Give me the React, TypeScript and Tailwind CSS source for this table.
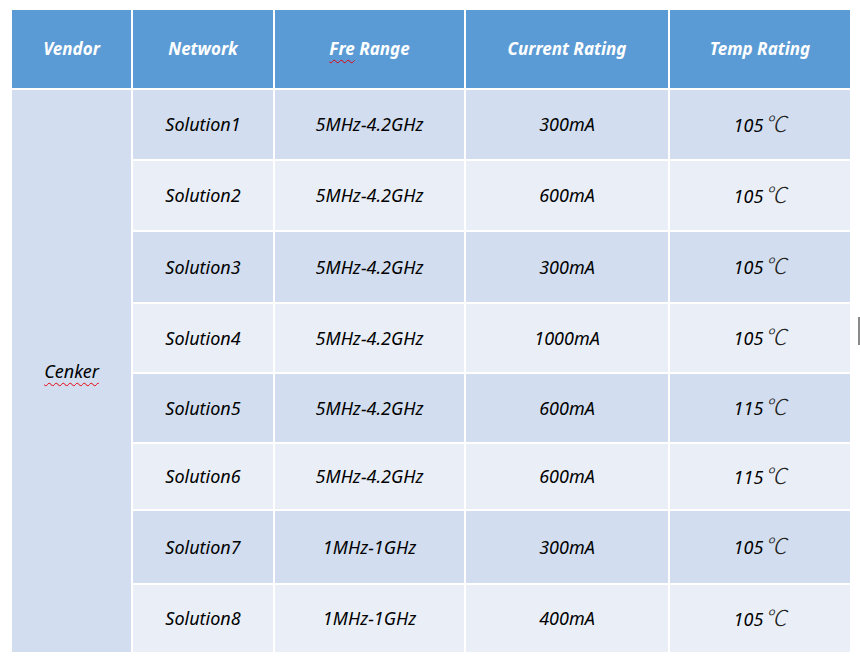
const rows = [
  { network: "Solution1", range: "5MHz-4.2GHz", current: "300mA", temp: "105", h: "h-[69px]" },
  { network: "Solution2", range: "5MHz-4.2GHz", current: "600mA", temp: "105", h: "h-[69px]" },
  { network: "Solution3", range: "5MHz-4.2GHz", current: "300mA", temp: "105", h: "h-[70px]" },
  { network: "Solution4", range: "5MHz-4.2GHz", current: "1000mA", temp: "105", h: "h-[68px]" },
  { network: "Solution5", range: "5MHz-4.2GHz", current: "600mA", temp: "115", h: "h-[68px]" },
  { network: "Solution6", range: "5MHz-4.2GHz", current: "600mA", temp: "115", h: "h-[65px]" },
  { network: "Solution7", range: "1MHz-1GHz", current: "300mA", temp: "105", h: "h-[72px]" },
  { network: "Solution8", range: "1MHz-1GHz", current: "400mA", temp: "105", h: "h-[67px]" },
];

function Cell({ children, shade, h }: { children: React.ReactNode; shade: boolean; h: string }) {
  return (
    <div className={`flex items-center justify-center ${h} ${shade ? "bg-[#d2deef]" : "bg-[#eaeff7]"}`}>
      {children}
    </div>
  );
}

function Temp({ value }: { value: string }) {
  return (
    <span className="flex items-baseline">
      {value}
      <span className="ml-[1px] font-['Noto_Sans_CJK_SC',sans-serif] text-[22px] leading-none font-extralight text-[#222]">℃</span>
    </span>
  );
}

export default function App() {
  return (
    <div className="relative h-[661px] w-[860px] bg-white pl-[12px] pt-[10px] font-['Noto_Sans',sans-serif] text-[18px] italic text-black">
      <div className="grid w-[838px] grid-cols-[119px_140px_189px_202px_180px] gap-[2px] bg-white">
        {["Vendor", "Network", "Fre Range", "Current Rating", "Temp Rating"].map((t) => (
          <div key={t} className="flex h-[78px] items-center justify-center bg-[#5b9bd5] text-[17px] font-bold text-white">
            {t === "Fre Range" ? (
              <span>
                <span className="underline decoration-red-600 decoration-wavy decoration-1 underline-offset-4">Fre</span> Range
              </span>
            ) : (
              t
            )}
          </div>
        ))}
        <div className="row-span-8 flex items-center justify-center bg-[#d2deef]">
          <span className="underline decoration-red-600 decoration-wavy decoration-1 underline-offset-4">Cenker</span>
        </div>
        {rows.map((r, i) => (
          <div key={r.network} className="contents">
            <Cell shade={i % 2 === 0} h={r.h}>{r.network}</Cell>
            <Cell shade={i % 2 === 0} h={r.h}>{r.range}</Cell>
            <Cell shade={i % 2 === 0} h={r.h}>{r.current}</Cell>
            <Cell shade={i % 2 === 0} h={r.h}>
              <Temp value={r.temp} />
            </Cell>
          </div>
        ))}
      </div>
      <div className="absolute left-[858px] top-[317px] h-[28px] w-[2px] bg-[#8a8a8a]" />
    </div>
  );
}
